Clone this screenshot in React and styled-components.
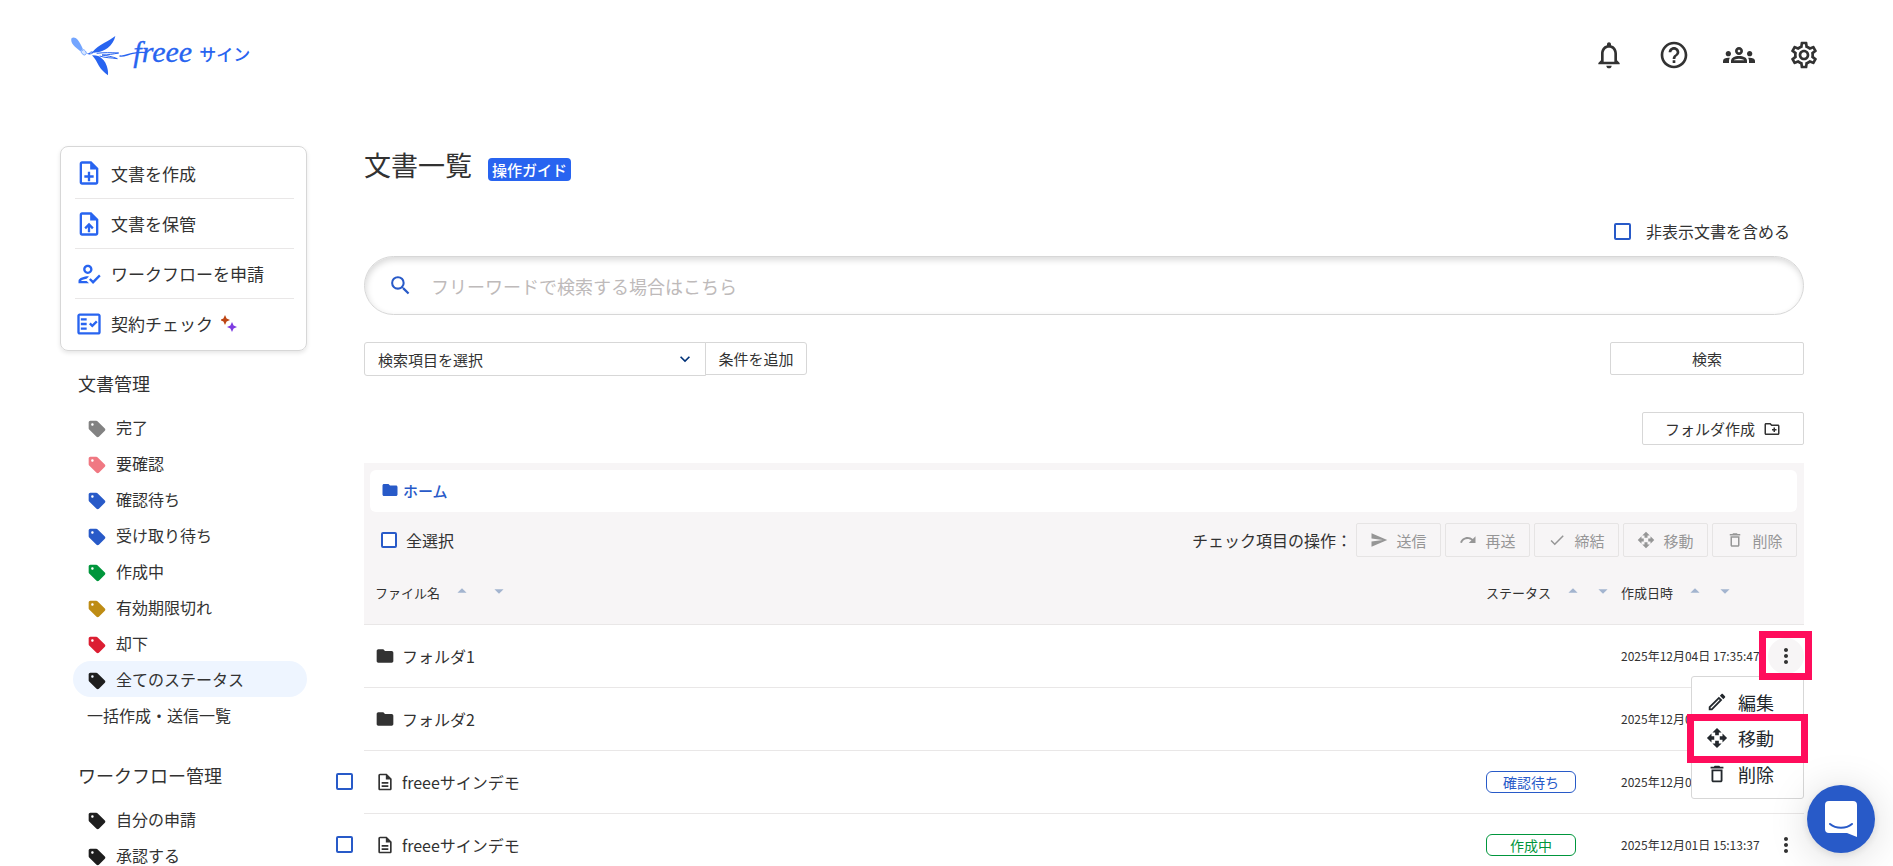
import React from "react";
import styled, {createGlobalStyle} from "styled-components";
import {
  MdArrowDropDown,
  MdArrowDropUp,
  MdCheck,
  MdDeleteOutline,
  MdExpandMore,
  MdFolder,
  MdHelpOutline,
  MdMoreVert,
  MdOpenWith,
  MdOutlineCreateNewFolder,
  MdOutlineDescription,
  MdOutlineEdit,
  MdOutlineFactCheck,
  MdOutlineGroups,
  MdOutlineHowToReg,
  MdOutlineNoteAdd,
  MdOutlineNotifications,
  MdOutlineSettings,
  MdOutlineUploadFile,
  MdRedo,
  MdSearch,
  MdSell,
  MdSend,
} from "react-icons/md";

const colors = {
  text: "#323232",
  primary: "#285ac8",
  brand: "#2864f0",
  green: "#00963c",
  border: "#d7d7d7",
  line: "#e9e7e7",
  panel: "#f7f5f6",
  mark: "#ff0d5c",
};

const GlobalStyle = createGlobalStyle`
  * {
    box-sizing: border-box;
  }
  body {
    margin: 0;
    background: white;
    color: ${colors.text};
    font-family: "Noto Sans CJK JP", "Noto Sans", sans-serif;
    font-size: 16px;
  }
  button, input, select {
    font-family: inherit;
    color: inherit;
    margin: 0;
  }
  button {
    cursor: pointer;
  }
  a {
    color: inherit;
    text-decoration: none;
  }
  svg {
    display: block;
    flex-shrink: 0;
  }
`;

const StyledHeader = styled.header`
  display: flex;
  align-items: center;
  justify-content: space-between;
  height: 110px;
  padding: 0 73px 0 70px;
  nav {
    display: flex;
    gap: 33px;
  }
`;

const IconButton = styled.button`
  display: flex;
  padding: 0;
  border: none;
  background: none;
  font-size: 32px;
`;

const Layout = styled.div`
  display: flex;
  align-items: flex-start;
  gap: 27px;
  padding: 36px 89px 0 60px;
`;

const Sidebar = styled.aside`
  flex: 0 0 247px;
`;

const ActionCard = styled.nav`
  padding: 1px 12px 2px 14px;
  border: 1px solid ${colors.border};
  border-radius: 8px;
  box-shadow: 0 2px 4px rgba(0, 0, 0, 0.1);
`;

const ActionLink = styled.a`
  display: flex;
  align-items: center;
  gap: 8px;
  height: 50px;
  font-size: 17px;
  & + & {
    border-top: 1px solid ${colors.line};
  }
  .icon {
    color: ${colors.brand};
    font-size: 28px;
  }
`;

const SideTitle = styled.h2`
  margin: 19px 0 13px 18px;
  font-size: 18px;
  line-height: 26px;
  font-weight: 400;
`;

const SideList = styled.ul`
  list-style: none;
  margin: 0 0 29px 13px;
  padding: 0;
`;

const SideLink = styled.a`
  display: flex;
  align-items: center;
  gap: 9px;
  height: 36px;
  padding-left: 14px;
  border-radius: 18px;
  background: ${props => (props.$active ? "#eef5ff" : "none")};
  svg {
    margin-top: 4px;
    color: ${props => props.$tag};
    font-size: 20px;
  }
`;

const Main = styled.main`
  flex: 1;
  min-width: 0;
`;

const Section = styled.section`
  margin-left: 30px;
`;

const TitleRow = styled.div`
  display: flex;
  align-items: center;
  gap: 16px;
  height: 38px;
  h1 {
    margin: 0;
    font-size: 27px;
    line-height: 38px;
    font-weight: 400;
  }
  a {
    margin-top: 8px;
    padding: 0 4px;
    border-radius: 4px;
    background: ${colors.brand};
    color: white;
    font-size: 15px;
    line-height: 23px;
    font-weight: 500;
  }
`;

const Checkbox = styled.input.attrs({type: "checkbox"})`
  appearance: none;
  display: block;
  flex-shrink: 0;
  width: ${props => props.$size || 17}px;
  height: ${props => props.$size || 17}px;
  border: 2px solid ${colors.primary};
  border-radius: 2px;
  background: white;
  &:checked {
    background: ${colors.primary};
  }
`;

const CheckLabel = styled.label`
  display: flex;
  align-items: center;
  gap: ${props => props.$gap}px;
  line-height: 24px;
`;

const HiddenFilter = styled.div`
  display: flex;
  justify-content: flex-end;
  padding: 35px 14px 13px 0;
`;

const SearchBox = styled.div`
  display: flex;
  align-items: center;
  gap: 18px;
  height: 59px;
  padding: 0 23px;
  border: 1px solid ${colors.border};
  border-radius: 30px;
  box-shadow: inset 1px 3px 6px rgba(0, 0, 0, 0.15);
  svg {
    color: ${colors.primary};
    font-size: 25px;
  }
  input {
    flex: 1;
    padding: 0;
    border: none;
    outline: none;
    background: none;
    font-size: 18px;
    line-height: 28px;
  }
  input::placeholder {
    color: #bebaba;
  }
`;

const FilterRow = styled.div`
  display: flex;
  align-items: flex-start;
  margin-top: 27px;
`;

const SelectBox = styled.div`
  display: grid;
  align-items: center;
  width: 342px;
  select,
  svg {
    grid-area: 1 / 1;
  }
  select {
    appearance: none;
    height: 34px;
    padding: 0 13px;
    border: 1px solid ${colors.border};
    border-radius: 3px 0 0 3px;
    background: white;
    font-size: 15px;
  }
  svg {
    justify-self: end;
    margin-right: 11px;
    color: #003278;
    font-size: 20px;
    pointer-events: none;
  }
`;

const Button = styled.button`
  display: flex;
  align-items: center;
  justify-content: center;
  gap: 8px;
  height: 33px;
  min-width: ${props => props.$width}px;
  padding: 0;
  border: 1px solid ${colors.border};
  border-radius: 2px;
  background: white;
  font-size: 15px;
  svg {
    font-size: 18px;
  }
`;

const AddButton = styled(Button)`
  margin: 0 auto 0 -1px;
  border-radius: 0 3px 3px 0;
`;

const FolderRow = styled.div`
  display: flex;
  justify-content: flex-end;
  margin: 36px 0 18px;
`;

const Panel = styled.div`
  padding: 7px 7px 0 6px;
  background: ${colors.panel};
`;

const Breadcrumb = styled.nav`
  height: 42px;
  padding-left: 11px;
  border-radius: 6px;
  background: white;
  a {
    display: inline-flex;
    align-items: center;
    gap: 4px;
    height: 40px;
    color: ${colors.primary};
    font-size: 15px;
    font-weight: 500;
  }
  svg {
    font-size: 18px;
  }
`;

const BulkBar = styled.div`
  display: flex;
  align-items: center;
  justify-content: space-between;
  margin-top: 11px;
  padding-left: 11px;
  .operations {
    display: flex;
    align-items: center;
    gap: 4px;
  }
`;

const BulkButton = styled(Button)`
  height: 34px;
  border-color: #e6e4e4;
  background: none;
  color: #969696;
  cursor: default;
`;

const FileTable = styled.table`
  width: 100%;
  table-layout: fixed;
  border-collapse: collapse;
  th,
  td {
    height: 63px;
    padding: 0;
    text-align: left;
    font-weight: 400;
  }
  th {
    height: 67px;
  }
  td:first-child {
    padding-left: 2px;
  }
  th + th,
  td + td {
    padding-left: 11px;
    border-bottom: 1px solid ${colors.line};
  }
  th + th {
    background: ${colors.panel};
  }
  td + td:last-child {
    padding-left: 4px;
  }
  .check {
    width: 30px;
  }
  .status {
    width: 135px;
  }
  .date {
    width: 154px;
  }
  .menu {
    width: 40px;
  }
`;

const SortHead = styled.div`
  display: flex;
  align-items: center;
  padding-top: 5px;
  font-size: 13px;
  line-height: 20px;
  white-space: nowrap;
  button {
    display: flex;
    margin: 0 0 4px ${props => props.$gap || 8}px;
    padding: 0;
    border: none;
    background: none;
    color: #a3b4cf;
    font-size: 22px;
  }
  span + button {
    margin-left: 11px;
  }
`;

const FileName = styled.a`
  display: flex;
  align-items: center;
  gap: 7px;
  svg {
    font-size: 20px;
  }
`;

const Status = styled.span`
  display: block;
  width: 90px;
  border: 1px solid ${props => props.$color};
  border-radius: 6px;
  color: ${props => props.$color};
  background: white;
  font-size: 14px;
  line-height: 20px;
  text-align: center;
`;

const DateText = styled.time`
  display: block;
  font-size: 12px;
  line-height: 20px;
  white-space: nowrap;
`;

const MenuAnchor = styled.div`
  position: relative;
  width: 36px;
  height: 36px;
`;

const MenuButton = styled.button`
  position: relative;
  display: flex;
  align-items: center;
  justify-content: center;
  width: 36px;
  height: 36px;
  padding: 0;
  border: none;
  border-radius: 50%;
  background: ${props => (props.$open ? colors.panel : "none")};
  font-size: 24px;
  z-index: ${props => (props.$open ? 3 : 0)};
`;

const Highlight = styled.span`
  position: absolute;
  inset: ${props => props.$inset};
  border: 7px solid ${colors.mark};
  pointer-events: none;
`;

const Menu = styled.div`
  position: absolute;
  top: 38px;
  right: 0;
  z-index: 2;
  width: 113px;
  padding: 7px 0 6px;
  border: 1px solid ${colors.border};
  border-radius: 3px;
  background: white;
`;

const MenuItem = styled.button`
  position: relative;
  display: flex;
  align-items: center;
  gap: 10px;
  width: 100%;
  height: 36px;
  padding: 0 0 0 14px;
  border: none;
  background: none;
  color: #23282d;
  font-size: 18px;
  svg {
    font-size: 22px;
  }
`;

const ChatButton = styled.button`
  position: fixed;
  right: 18px;
  bottom: 13px;
  z-index: 5;
  display: flex;
  align-items: center;
  justify-content: center;
  width: 68px;
  height: 68px;
  padding: 0;
  border: none;
  border-radius: 50%;
  background: ${colors.primary};
  box-shadow: 0 2px 8px rgba(0, 0, 0, 0.1), 0 4px 40px rgba(0, 0, 0, 0.15);
`;

const Logo = () => (
  <svg width="180" height="44" viewBox="60 38 540 132" role="img" aria-label="freee サイン">
    <path
      d="M65 53c5-3 12-2 18 5 6 8 11 17 16 29l-8 6c-7-7-15-12-21-19-6-7-8-16-5-21z"
      fill="#73a5ff"
    />
    <path
      d="M93 93l7-5c5 1 8 6 9 10 0 3-3 6-6 6-5-1-9-6-10-11z"
      fill="#d7e6ff"
      stroke="#73a5ff"
      strokeWidth="3"
    />
    <path
      d="M110 100l8-2c3-4 7-5 10-4 9-10 20-18 34-26 14-8 24-13 34-21-3 15-11 26-23 36-9 7-20 11-31 13-6 1-10 2-13 1l-3 4c-6 2-10 2-16-1z"
      fill={colors.brand}
    />
    <path
      d="M126 105c8 0 15 1 21 3 11 7 19 16 23 28 3 9 5 18 4 29-11-8-20-17-27-28-6-11-12-23-21-32z"
      fill={colors.brand}
    />
    <path
      d="M140 99c22-3 42-2 66-1-17 3-32 6-50 6 14 2 32 5 46 11-18-3-37-2-53-8"
      stroke={colors.brand}
      strokeWidth="3"
      strokeLinejoin="round"
      fill="none"
    />
    <circle cx="123" cy="98" r="2" fill="white" />
    <path
      d="M210 107c12 2 23-5 38-8 16-3 28-4 40-2"
      stroke={colors.brand}
      strokeWidth="4"
      strokeLinecap="round"
      fill="none"
    />
    <text
      x="250"
      y="124"
      fill={colors.brand}
      stroke={colors.brand}
      strokeWidth="1"
      fontFamily="Liberation Serif, serif"
      fontStyle="italic"
      fontSize="90"
    >
      freee
    </text>
    <text
      x="448"
      y="122"
      fill={colors.brand}
      fontFamily="Noto Sans CJK JP, sans-serif"
      fontWeight="500"
      fontSize="51"
    >
      サイン
    </text>
  </svg>
);

const Sparkles = () => (
  <svg width="18" height="18" viewBox="1 0 18 18">
    <path d="M5 0l1.600 3.400L10 5l-3.400 1.600L5 10l-1.600-3.400L0 5l3.400-1.600z" fill="#be4614" />
    <path d="M12 7l1.600 3.400L17 12l-3.400 1.600L12 17l-1.600-3.400L7 12l3.400-1.600z" fill="#7d3ce1" />
  </svg>
);

const ChatIcon = () => (
  <svg width="32" height="36" viewBox="0 0 32 36">
    <path d="M4 0h24a4 4 0 0 1 4 4v32l-10-4H4a4 4 0 0 1-4-4V4a4 4 0 0 1 4-4z" fill="white" />
    <path
      d="M5 23c6 5 16 5 22 0"
      stroke={colors.primary}
      strokeWidth="2"
      strokeLinecap="round"
      fill="none"
    />
  </svg>
);

const actions = [
  {icon: MdOutlineNoteAdd, label: "文書を作成"},
  {icon: MdOutlineUploadFile, label: "文書を保管"},
  {icon: MdOutlineHowToReg, label: "ワークフローを申請"},
  {icon: MdOutlineFactCheck, label: "契約チェック", sparkle: true},
];

const documentLinks = [
  {label: "完了", tag: "#828282"},
  {label: "要確認", tag: "#f07882"},
  {label: "確認待ち", tag: "#285ac8"},
  {label: "受け取り待ち", tag: "#285ac8"},
  {label: "作成中", tag: "#00963c"},
  {label: "有効期限切れ", tag: "#be8c14"},
  {label: "却下", tag: "#dc1e32"},
  {label: "全てのステータス", tag: "#1e1e1e", active: true},
  {label: "一括作成・送信一覧"},
];

const workflowLinks = [
  {label: "自分の申請", tag: "#1e1e1e"},
  {label: "承認する", tag: "#1e1e1e"},
];

const bulkActions = [
  {icon: MdSend, label: "送信"},
  {icon: MdRedo, label: "再送"},
  {icon: MdCheck, label: "締結"},
  {icon: MdOpenWith, label: "移動"},
  {icon: MdDeleteOutline, label: "削除"},
];

const menuItems = [
  {icon: MdOutlineEdit, label: "編集"},
  {icon: MdOpenWith, label: "移動", marked: true},
  {icon: MdDeleteOutline, label: "削除"},
];

const files = [
  {name: "フォルダ1", folder: true, date: "2025年12月04日 17:35:47", open: true},
  {name: "フォルダ2", folder: true, date: "2025年12月04日 17:35:40"},
  {name: "freeeサインデモ", date: "2025年12月01日 15:14:02", status: "確認待ち", color: colors.primary},
  {name: "freeeサインデモ", date: "2025年12月01日 15:13:37", status: "作成中", color: colors.green},
];

const LinkList = ({links}) => (
  <SideList>
    {links.map(({label, tag, active}) => (
      <li key={label}>
        <SideLink href="#" $tag={tag} $active={active}>
          {tag && <MdSell />}
          {label}
        </SideLink>
      </li>
    ))}
  </SideList>
);

const Sort = ({label, gap}) => (
  <SortHead $gap={gap}>
    <span>{label}</span>
    <button aria-label={`${label} 昇順`}>
      <MdArrowDropUp />
    </button>
    <button aria-label={`${label} 降順`}>
      <MdArrowDropDown />
    </button>
  </SortHead>
);

const FileRow = ({name, folder, date, status, color, open}) => (
  <tr>
    <td>{!folder && <Checkbox aria-label={name} />}</td>
    <td>
      <FileName href="#">
        {folder ? <MdFolder /> : <MdOutlineDescription />}
        {name}
      </FileName>
    </td>
    <td>{status && <Status $color={color}>{status}</Status>}</td>
    <td>
      <DateText>{date}</DateText>
    </td>
    <td>
      <MenuAnchor>
        <MenuButton aria-label="メニュー" $open={open}>
          <MdMoreVert />
          {open && <Highlight $inset="-7px -8px -6px -9px" />}
        </MenuButton>
        {open && (
          <Menu>
            {menuItems.map(({icon: Icon, label, marked}) => (
              <MenuItem key={label}>
                <Icon />
                {label}
                {marked && <Highlight $inset="-6px -5px -7px -5px" />}
              </MenuItem>
            ))}
          </Menu>
        )}
      </MenuAnchor>
    </td>
  </tr>
);

const App = () => {
  return (
    <>
      <GlobalStyle />
      <StyledHeader>
        <a href="#">
          <Logo />
        </a>
        <nav>
          <IconButton aria-label="通知">
            <MdOutlineNotifications />
          </IconButton>
          <IconButton aria-label="ヘルプ">
            <MdHelpOutline />
          </IconButton>
          <IconButton aria-label="メンバー">
            <MdOutlineGroups />
          </IconButton>
          <IconButton aria-label="設定">
            <MdOutlineSettings />
          </IconButton>
        </nav>
      </StyledHeader>
      <Layout>
        <Sidebar>
          <ActionCard>
            {actions.map(({icon: Icon, label, sparkle}) => (
              <ActionLink href="#" key={label}>
                <Icon className="icon" />
                {label}
                {sparkle && <Sparkles />}
              </ActionLink>
            ))}
          </ActionCard>
          <SideTitle>文書管理</SideTitle>
          <LinkList links={documentLinks} />
          <SideTitle>ワークフロー管理</SideTitle>
          <LinkList links={workflowLinks} />
        </Sidebar>
        <Main>
          <Section>
            <TitleRow>
              <h1>文書一覧</h1>
              <a href="#">操作ガイド</a>
            </TitleRow>
            <HiddenFilter>
              <CheckLabel $gap={15}>
                <Checkbox />
                非表示文書を含める
              </CheckLabel>
            </HiddenFilter>
            <SearchBox>
              <MdSearch />
              <input aria-label="フリーワード" placeholder="フリーワードで検索する場合はこちら" />
            </SearchBox>
            <FilterRow>
              <SelectBox>
                <select aria-label="検索項目">
                  <option>検索項目を選択</option>
                </select>
                <MdExpandMore />
              </SelectBox>
              <AddButton $width={102}>条件を追加</AddButton>
              <Button $width={194}>検索</Button>
            </FilterRow>
            <FolderRow>
              <Button $width={162}>
                フォルダ作成
                <MdOutlineCreateNewFolder />
              </Button>
            </FolderRow>
            <Panel>
              <Breadcrumb>
                <a href="#">
                  <MdFolder />
                  ホーム
                </a>
              </Breadcrumb>
              <BulkBar>
                <CheckLabel $gap={9}>
                  <Checkbox $size={16} />
                  全選択
                </CheckLabel>
                <div className="operations">
                  <span>チェック項目の操作：</span>
                  {bulkActions.map(({icon: Icon, label}) => (
                    <BulkButton key={label} $width={85} disabled>
                      <Icon />
                      {label}
                    </BulkButton>
                  ))}
                </div>
              </BulkBar>
            </Panel>
          </Section>
          <FileTable>
            <thead>
              <tr>
                <th className="check"></th>
                <th>
                  <Sort label="ファイル名" gap={15} />
                </th>
                <th className="status">
                  <Sort label="ステータス" />
                </th>
                <th className="date">
                  <Sort label="作成日時" />
                </th>
                <th className="menu"></th>
              </tr>
            </thead>
            <tbody>
              {files.map((file, i) => (
                <FileRow key={i} {...file} />
              ))}
            </tbody>
          </FileTable>
        </Main>
      </Layout>
      <ChatButton aria-label="チャット">
        <ChatIcon />
      </ChatButton>
    </>
  );
};

export default App;
